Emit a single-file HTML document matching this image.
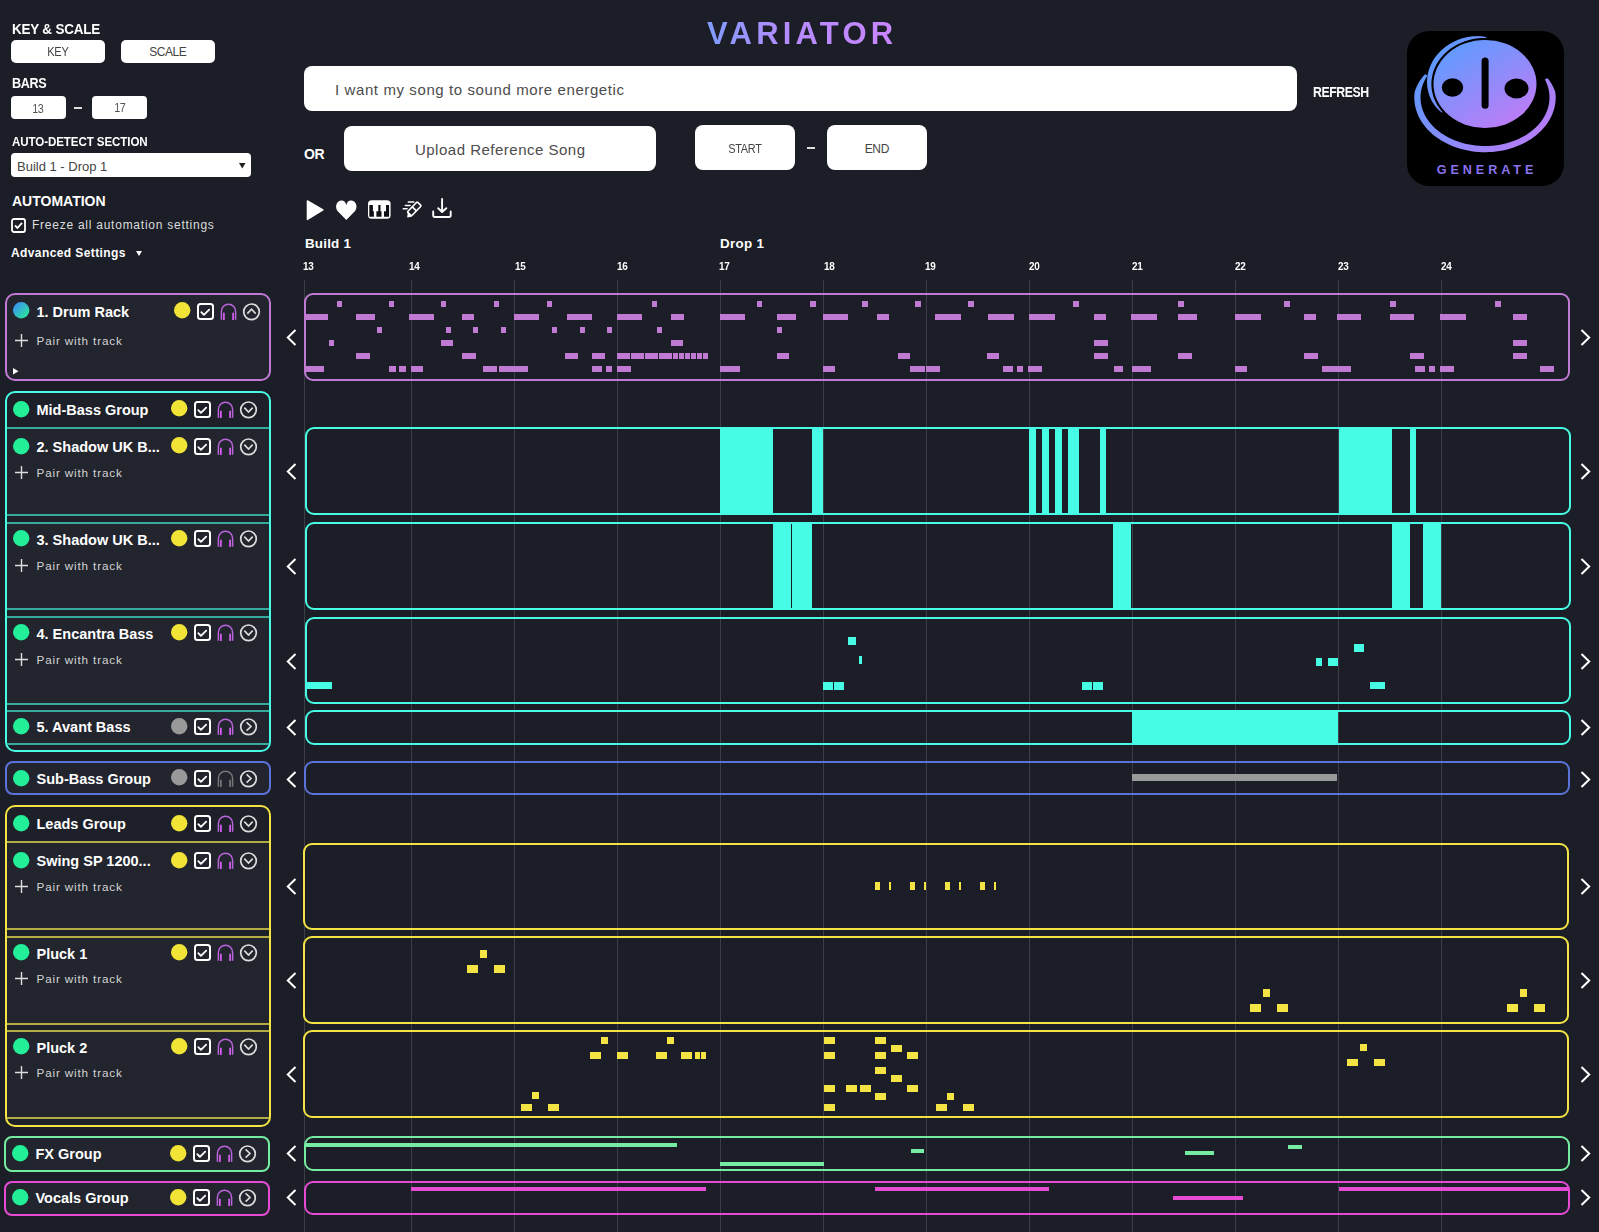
<!DOCTYPE html>
<html><head><meta charset="utf-8"><style>
html,body{margin:0;padding:0;}
body{width:1599px;height:1232px;background:#1b1e26;position:relative;overflow:hidden;font-family:"Liberation Sans", sans-serif;}
.t{position:absolute;white-space:nowrap;line-height:1;}
svg{position:absolute;overflow:visible;}
</style></head><body>

<div class="t" style="left:12px;top:21.65px;font-size:14px;font-weight:700;color:#fff;letter-spacing:-0.2px;transform:scaleX(0.96);transform-origin:0 0;">KEY &amp; SCALE</div>
<div style="position:absolute;left:11px;top:40px;width:94px;height:23px;background:#fff;border-radius:5px;"></div>
<div style="position:absolute;left:121px;top:40px;width:94px;height:23px;background:#fff;border-radius:5px;"></div>
<div class="t" style="left:-92.0px;width:300px;text-align:center;top:46.14px;font-size:12px;font-weight:400;color:#444;letter-spacing:-0.3px;text-indent:-0.3px;transform:scaleX(0.92);transform-origin:50% 0;">KEY</div>
<div class="t" style="left:18.0px;width:300px;text-align:center;top:46.24px;font-size:12px;font-weight:400;color:#444;letter-spacing:-0.4px;text-indent:-0.4px;">SCALE</div>
<div class="t" style="left:12px;top:76.45px;font-size:14px;font-weight:700;color:#fff;letter-spacing:-0.4px;transform:scaleX(0.9);transform-origin:0 0;">BARS</div>
<div style="position:absolute;left:11px;top:96px;width:55px;height:23px;background:#fff;border-radius:4px;"></div>
<div style="position:absolute;left:92px;top:96px;width:55px;height:23px;background:#fff;border-radius:4px;"></div>
<div class="t" style="left:-112.0px;width:300px;text-align:center;top:102.84px;font-size:12px;font-weight:400;color:#555;letter-spacing:-0.4px;text-indent:-0.4px;transform:scaleX(0.9);transform-origin:50% 0;">13</div>
<div class="t" style="left:-30.0px;width:300px;text-align:center;top:101.84px;font-size:12px;font-weight:400;color:#555;letter-spacing:-0.4px;text-indent:-0.4px;transform:scaleX(0.9);transform-origin:50% 0;">17</div>
<div style="position:absolute;left:74px;top:107px;width:8px;height:1.6px;background:#ddd;"></div>
<div class="t" style="left:12px;top:135.64px;font-size:12px;font-weight:700;color:#fff;letter-spacing:-0.1px;transform:scaleX(0.965);transform-origin:0 0;">AUTO-DETECT SECTION</div>
<div style="position:absolute;left:11px;top:153px;width:240px;height:24px;background:#fff;border-radius:4px;"></div>
<div class="t" style="left:17px;top:159.50px;font-size:13px;font-weight:400;color:#444;letter-spacing:0px;">Build 1 - Drop 1</div>
<svg style="left:239px;top:163px" width="7" height="6"><path d="M0 0 L6.5 0 L3.25 5.5 Z" fill="#222"/></svg>
<div class="t" style="left:12px;top:194.45px;font-size:14px;font-weight:700;color:#fff;letter-spacing:0px;">AUTOMATION</div>
<svg style="left:11px;top:218px" width="15" height="15"><rect x="1" y="1" width="13" height="13" rx="2" fill="none" stroke="#fff" stroke-width="1.8"/><path d="M4 7.5 L6.5 10 L11 4.8" fill="none" stroke="#fff" stroke-width="1.8"/></svg>
<div class="t" style="left:32px;top:219.34px;font-size:12px;font-weight:400;color:#ddd;letter-spacing:0.75px;">Freeze all automation settings</div>
<div class="t" style="left:11px;top:247.34px;font-size:12px;font-weight:700;color:#fff;letter-spacing:0.4px;">Advanced Settings</div>
<svg style="left:136px;top:251px" width="7" height="6"><path d="M0 0 L6 0 L3 5 Z" fill="#fff"/></svg>
<div class="t" style="left:707px;top:17.66px;font-size:31px;font-weight:700;letter-spacing:4.2px;background:linear-gradient(90deg,#7f9cff 0%,#b48cff 40%,#c985ff 100%);-webkit-background-clip:text;background-clip:text;color:transparent;">VARIATOR</div>
<div style="position:absolute;left:304px;top:66px;width:993px;height:45px;background:#fff;border-radius:8px;"></div>
<div class="t" style="left:335px;top:82.30px;font-size:15px;font-weight:400;color:#4c4c4c;letter-spacing:0.6px;">I want my song to sound more energetic</div>
<div class="t" style="left:1312.5px;top:84.95px;font-size:14px;font-weight:700;color:#fff;letter-spacing:-0.5px;transform:scaleX(0.88);transform-origin:0 0;">REFRESH</div>
<div class="t" style="left:304px;top:146.75px;font-size:14px;font-weight:700;color:#fff;letter-spacing:-0.4px;">OR</div>
<div style="position:absolute;left:344px;top:126px;width:312px;height:45px;background:#fff;border-radius:8px;"></div>
<div class="t" style="left:350.0px;width:300px;text-align:center;top:142.10px;font-size:15px;font-weight:400;color:#4c4c4c;letter-spacing:0.5px;text-indent:0.5px;">Upload Reference Song</div>
<div style="position:absolute;left:695px;top:125px;width:100px;height:45px;background:#fff;border-radius:8px;"></div>
<div style="position:absolute;left:827px;top:125px;width:100px;height:45px;background:#fff;border-radius:8px;"></div>
<div class="t" style="left:595.0px;width:300px;text-align:center;top:143.34px;font-size:12px;font-weight:400;color:#444;letter-spacing:-0.3px;text-indent:-0.3px;transform:scaleX(0.91);transform-origin:50% 0;">START</div>
<div class="t" style="left:727.0px;width:300px;text-align:center;top:143.34px;font-size:12px;font-weight:400;color:#444;letter-spacing:-0.3px;text-indent:-0.3px;">END</div>
<div style="position:absolute;left:807px;top:147px;width:8px;height:1.8px;background:#ddd;"></div>
<svg style="left:1407px;top:31px" width="157" height="155" viewBox="0 0 157 155">
<defs>
<linearGradient id="lg" x1="0.15" y1="0" x2="0.85" y2="1">
<stop offset="0" stop-color="#5a9dff"/><stop offset="1" stop-color="#c47af6"/></linearGradient>
<linearGradient id="lg2" gradientUnits="userSpaceOnUse" x1="10" y1="10" x2="150" y2="130">
<stop offset="0" stop-color="#4f9dff"/><stop offset="1" stop-color="#c977f5"/></linearGradient>
</defs>
<rect x="0" y="0" width="157" height="155" rx="22" fill="#000"/>
<ellipse cx="78" cy="53" rx="51.5" ry="44" fill="url(#lg)"/>
<path d="M79.87 6.93 L78.35 6.90 L76.83 6.91 L75.31 6.96 L73.79 7.04 L72.28 7.16 L70.77 7.32 L69.27 7.52 L67.77 7.75 L66.28 8.01 L64.81 8.32 L63.34 8.66 L61.88 9.03 L60.44 9.44 L59.01 9.89 L57.60 10.37 L56.20 10.89 L54.82 11.43 L53.46 12.02 L52.12 12.63 L50.80 13.28 L49.50 13.96 L48.22 14.67 L46.97 15.41 L45.74 16.18 L44.54 16.98 L43.37 17.81 L42.22 18.67 L41.10 19.56 L40.02 20.47 L38.96 21.41 L37.93 22.38 L36.94 23.37 L35.98 24.38 L35.05 25.42 L34.16 26.48 L33.30 27.56 L32.48 28.66 L31.70 29.78 L30.95 30.91 L30.24 32.07 L29.57 33.24 L28.94 34.43 L28.35 35.64 L27.79 36.86 L27.28 38.09 L26.81 39.33 L26.38 40.58 L25.99 41.85 L25.65 43.12 L25.34 44.40 L25.08 45.69 L24.86 46.98 L24.68 48.28 L24.55 49.58 L24.46 50.89 L24.41 52.20 L24.40 53.50 L24.44 54.81 L24.52 56.12 L24.65 57.42 L24.81 58.72 L25.02 60.01 L25.28 61.30 L25.57 62.58 L25.91 63.86 L26.29 65.13 L26.71 66.38 L27.17 67.63 L27.67 68.86 L28.22 70.08 L28.80 71.29 L29.42 72.48 L30.08 73.66 L30.78 74.82 L31.52 75.96 L32.30 77.09 L33.11 78.19 L33.96 79.28 L34.84 80.34 L35.76 81.38 L35.53 81.57 L34.07 80.91 L32.89 80.02 L31.79 79.05 L30.75 78.03 L29.77 76.97 L28.83 75.87 L27.94 74.74 L27.09 73.57 L26.29 72.37 L25.54 71.15 L24.83 69.90 L24.17 68.63 L23.56 67.34 L22.99 66.02 L22.47 64.69 L22.01 63.34 L21.59 61.98 L21.22 60.60 L20.90 59.21 L20.63 57.81 L20.41 56.39 L20.24 54.97 L20.12 53.55 L20.06 52.12 L20.04 50.69 L20.08 49.25 L20.17 47.82 L20.31 46.38 L20.50 44.95 L20.74 43.53 L21.03 42.11 L21.37 40.69 L21.76 39.29 L22.20 37.90 L22.70 36.52 L23.24 35.15 L23.83 33.80 L24.46 32.46 L25.15 31.15 L25.88 29.85 L26.65 28.57 L27.47 27.31 L28.34 26.08 L29.25 24.87 L30.20 23.69 L31.19 22.53 L32.22 21.40 L33.29 20.31 L34.40 19.24 L35.55 18.20 L36.73 17.20 L37.94 16.23 L39.19 15.29 L40.47 14.40 L41.78 13.53 L43.12 12.71 L44.49 11.92 L45.89 11.17 L47.31 10.47 L48.75 9.80 L50.21 9.18 L51.69 8.59 L53.20 8.05 L54.72 7.56 L56.25 7.10 L57.80 6.70 L59.36 6.33 L60.93 6.02 L62.51 5.75 L64.10 5.52 L65.69 5.35 L67.28 5.22 L68.88 5.14 L70.47 5.12 L72.06 5.15 L73.65 5.24 L75.23 5.39 L76.80 5.61 L78.36 5.94 L79.88 6.63 Z" fill="url(#lg2)"/>
<path d="M20.53 44.48 L19.14 46.67 L17.90 48.90 L16.80 51.18 L15.86 53.50 L15.07 55.85 L14.45 58.22 L13.98 60.62 L13.67 63.03 L13.52 65.45 L13.53 67.88 L13.70 70.29 L14.03 72.70 L14.52 75.10 L15.17 77.47 L15.98 79.82 L16.94 82.13 L18.06 84.40 L19.32 86.63 L20.73 88.81 L22.28 90.93 L23.97 92.99 L25.80 94.99 L27.76 96.92 L29.84 98.76 L32.04 100.53 L34.36 102.22 L36.79 103.81 L39.32 105.31 L41.94 106.71 L44.66 108.02 L47.46 109.22 L50.33 110.31 L53.28 111.30 L56.28 112.17 L59.34 112.93 L62.45 113.57 L65.60 114.09 L68.77 114.50 L71.97 114.79 L75.19 114.95 L78.41 115.00 L81.63 114.92 L84.84 114.73 L88.03 114.41 L91.20 113.97 L94.34 113.42 L97.44 112.75 L100.48 111.96 L103.47 111.06 L106.40 110.05 L109.26 108.92 L112.04 107.70 L114.73 106.37 L117.33 104.94 L119.84 103.41 L122.24 101.80 L124.52 100.09 L126.70 98.30 L128.75 96.43 L130.67 94.49 L132.47 92.48 L134.12 90.40 L135.64 88.26 L137.01 86.07 L138.24 83.83 L139.32 81.55 L140.24 79.23 L141.01 76.87 L141.62 74.49 L142.07 72.10 L142.36 69.68 L142.49 67.26 L142.46 64.84 L142.27 62.42 L141.92 60.01 L141.41 57.62 L140.74 55.25 L139.92 52.91 L138.94 50.60 L137.80 48.33 L140.68 47.17 L142.38 49.41 L143.93 51.74 L145.34 54.15 L146.59 56.66 L147.68 59.23 L148.45 61.90 L148.66 64.63 L148.69 67.36 L148.55 70.09 L148.23 72.81 L147.73 75.52 L147.06 78.20 L146.22 80.85 L145.21 83.47 L144.03 86.05 L142.69 88.57 L141.18 91.05 L139.52 93.46 L137.70 95.80 L135.74 98.07 L133.63 100.26 L131.38 102.37 L129.00 104.39 L126.49 106.31 L123.86 108.13 L121.11 109.85 L118.26 111.46 L115.31 112.96 L112.26 114.35 L109.13 115.61 L105.92 116.75 L102.64 117.77 L99.30 118.66 L95.91 119.42 L92.47 120.04 L89.00 120.53 L85.50 120.89 L81.98 121.11 L78.45 121.20 L74.92 121.15 L71.39 120.96 L67.89 120.64 L64.40 120.18 L60.96 119.59 L57.55 118.86 L54.20 118.01 L50.90 117.02 L47.67 115.91 L44.52 114.68 L41.45 113.33 L38.48 111.86 L35.60 110.27 L32.83 108.58 L30.17 106.78 L27.63 104.88 L25.21 102.89 L22.93 100.80 L20.78 98.63 L18.78 96.38 L16.93 94.06 L15.22 91.66 L13.68 89.21 L12.29 86.69 L11.07 84.13 L10.02 81.52 L9.13 78.87 L8.42 76.20 L7.88 73.50 L7.52 70.78 L7.33 68.05 L7.32 65.32 L7.48 62.59 L7.98 59.89 L8.95 57.27 L10.08 54.72 L11.38 52.25 L12.83 49.86 L14.43 47.55 L16.17 45.34 L18.04 43.21 Z" fill="url(#lg2)"/>
<ellipse cx="45.5" cy="56.5" rx="10.7" ry="9.2" fill="#000"/>
<ellipse cx="109.5" cy="57.5" rx="12" ry="10" fill="#000"/>
<rect x="74.6" y="26.6" width="7" height="51.2" rx="3.5" fill="#000"/>
</svg>
<div class="t" style="left:1405.0px;width:160px;text-align:center;top:163.93px;font-size:12.6px;font-weight:700;color:#8a73ee;letter-spacing:3.95px;text-indent:3.95px;">GENERATE</div>
<svg style="left:305px;top:199px" width="20" height="22" viewBox="0 0 20 22"><path d="M2.4 1.9 L17.9 10.9 L2.4 20.4 Z" fill="#fff" stroke="#fff" stroke-width="1.4" stroke-linejoin="round"/></svg>
<svg style="left:335px;top:200px" width="23" height="21" viewBox="0 0 23 21"><path d="M11.3 19.9 L3 11.6 C-0.2 8.4 0.6 1.3 6.1 0.6 C8.6 0.3 10.4 1.8 11.3 4.9 C12.2 1.8 14 0.3 16.5 0.6 C22 1.3 22.8 8.4 19.6 11.6 Z" fill="#fff"/></svg>
<svg style="left:367px;top:199px" width="25" height="21" viewBox="0 0 25 21"><rect x="1" y="1.2" width="22.6" height="18.6" rx="3.6" fill="#fff"/><path d="M2.3 6 H5.9 V12.2 H6.9 V17.7 H2.3 Z M11.3 6 H13.5 V12.2 H14.5 V17.7 H9.4 V12.2 H11.3 Z M19 6 H22.1 V17.7 H17 V12.2 H19 Z" fill="#0e1015"/></svg>
<svg style="left:400px;top:199px" width="23" height="21" viewBox="0 0 23 21"><g transform="translate(13.6 10.6) rotate(-46)"><rect x="-6" y="-2.9" width="14" height="5.8" rx="0.9" fill="none" stroke="#fff" stroke-width="1.7"/><path d="M1 -2.9 L1 2.9" stroke="#fff" stroke-width="1.6"/><path d="M-6 -1.6 L-9.3 0.9 L-6 2.9 Z" fill="#fff" stroke="#fff" stroke-width="1" stroke-linejoin="round"/></g><path d="M8.3 3.1 L13.8 3.1 M5.4 6.5 L10 6.5 M3.2 9.8 L7.1 9.8" stroke="#fff" stroke-width="1.5" stroke-linecap="round"/></svg>
<svg style="left:430px;top:196px" width="24" height="24" viewBox="0 0 24 24"><path d="M12.1 3 L12.1 15.6 M8.2 12.2 L12.1 16 L16.3 12.2" fill="none" stroke="#fff" stroke-width="1.9" stroke-linecap="round" stroke-linejoin="round"/><path d="M3.2 15.4 L3.2 19.2 Q3.2 21 5 21 L19 21 Q20.7 21 20.7 19.2 L20.7 15.4" fill="none" stroke="#fff" stroke-width="1.9" stroke-linecap="round" stroke-linejoin="round"/></svg>
<div class="t" style="left:305px;top:237.46px;font-size:13.4px;font-weight:700;color:#fff;letter-spacing:0.2px;">Build 1</div>
<div class="t" style="left:720px;top:237.06px;font-size:13.4px;font-weight:700;color:#fff;letter-spacing:0.3px;">Drop 1</div>
<div class="t" style="left:303px;top:260.10px;font-size:11.7px;font-weight:700;color:#fff;letter-spacing:-0.3px;transform:scaleX(0.85);transform-origin:0 0;">13</div>
<div style="position:absolute;left:304px;top:280px;width:1px;height:952px;background:#3b3e46;"></div>
<div class="t" style="left:409px;top:260.10px;font-size:11.7px;font-weight:700;color:#fff;letter-spacing:-0.3px;transform:scaleX(0.85);transform-origin:0 0;">14</div>
<div style="position:absolute;left:411px;top:280px;width:1px;height:952px;background:#3b3e46;"></div>
<div class="t" style="left:515px;top:260.10px;font-size:11.7px;font-weight:700;color:#fff;letter-spacing:-0.3px;transform:scaleX(0.85);transform-origin:0 0;">15</div>
<div style="position:absolute;left:514px;top:280px;width:1px;height:952px;background:#3b3e46;"></div>
<div class="t" style="left:617px;top:260.10px;font-size:11.7px;font-weight:700;color:#fff;letter-spacing:-0.3px;transform:scaleX(0.85);transform-origin:0 0;">16</div>
<div style="position:absolute;left:617px;top:280px;width:1px;height:952px;background:#3b3e46;"></div>
<div class="t" style="left:719px;top:260.10px;font-size:11.7px;font-weight:700;color:#fff;letter-spacing:-0.3px;transform:scaleX(0.85);transform-origin:0 0;">17</div>
<div style="position:absolute;left:720px;top:280px;width:1px;height:952px;background:#3b3e46;"></div>
<div class="t" style="left:824px;top:260.10px;font-size:11.7px;font-weight:700;color:#fff;letter-spacing:-0.3px;transform:scaleX(0.85);transform-origin:0 0;">18</div>
<div style="position:absolute;left:823px;top:280px;width:1px;height:952px;background:#3b3e46;"></div>
<div class="t" style="left:925px;top:260.10px;font-size:11.7px;font-weight:700;color:#fff;letter-spacing:-0.3px;transform:scaleX(0.85);transform-origin:0 0;">19</div>
<div style="position:absolute;left:926px;top:280px;width:1px;height:952px;background:#3b3e46;"></div>
<div class="t" style="left:1029px;top:260.10px;font-size:11.7px;font-weight:700;color:#fff;letter-spacing:-0.3px;transform:scaleX(0.85);transform-origin:0 0;">20</div>
<div style="position:absolute;left:1029px;top:280px;width:1px;height:952px;background:#3b3e46;"></div>
<div class="t" style="left:1132px;top:260.10px;font-size:11.7px;font-weight:700;color:#fff;letter-spacing:-0.3px;transform:scaleX(0.85);transform-origin:0 0;">21</div>
<div style="position:absolute;left:1132px;top:280px;width:1px;height:952px;background:#3b3e46;"></div>
<div class="t" style="left:1235px;top:260.10px;font-size:11.7px;font-weight:700;color:#fff;letter-spacing:-0.3px;transform:scaleX(0.85);transform-origin:0 0;">22</div>
<div style="position:absolute;left:1235px;top:280px;width:1px;height:952px;background:#3b3e46;"></div>
<div class="t" style="left:1338px;top:260.10px;font-size:11.7px;font-weight:700;color:#fff;letter-spacing:-0.3px;transform:scaleX(0.85);transform-origin:0 0;">23</div>
<div style="position:absolute;left:1338px;top:280px;width:1px;height:952px;background:#3b3e46;"></div>
<div class="t" style="left:1441px;top:260.10px;font-size:11.7px;font-weight:700;color:#fff;letter-spacing:-0.3px;transform:scaleX(0.85);transform-origin:0 0;">24</div>
<div style="position:absolute;left:1441px;top:280px;width:1px;height:952px;background:#3b3e46;"></div>
<div style="position:absolute;left:304px;top:293px;width:1266px;height:88px;box-sizing:border-box;border:2px solid #c07ad4;border-radius:9px;"></div>
<div style="position:absolute;left:337px;top:301px;width:5px;height:6px;background:#c07ad4;"></div>
<div style="position:absolute;left:389px;top:301px;width:5px;height:6px;background:#c07ad4;"></div>
<div style="position:absolute;left:441px;top:301px;width:5px;height:6px;background:#c07ad4;"></div>
<div style="position:absolute;left:494px;top:301px;width:5px;height:6px;background:#c07ad4;"></div>
<div style="position:absolute;left:547px;top:301px;width:5px;height:6px;background:#c07ad4;"></div>
<div style="position:absolute;left:652px;top:301px;width:5px;height:6px;background:#c07ad4;"></div>
<div style="position:absolute;left:757px;top:301px;width:5px;height:6px;background:#c07ad4;"></div>
<div style="position:absolute;left:810px;top:301px;width:6px;height:6px;background:#c07ad4;"></div>
<div style="position:absolute;left:862px;top:301px;width:6px;height:6px;background:#c07ad4;"></div>
<div style="position:absolute;left:915px;top:301px;width:6px;height:6px;background:#c07ad4;"></div>
<div style="position:absolute;left:968px;top:301px;width:6px;height:6px;background:#c07ad4;"></div>
<div style="position:absolute;left:1073px;top:301px;width:6px;height:6px;background:#c07ad4;"></div>
<div style="position:absolute;left:1178px;top:301px;width:6px;height:6px;background:#c07ad4;"></div>
<div style="position:absolute;left:1284px;top:301px;width:6px;height:6px;background:#c07ad4;"></div>
<div style="position:absolute;left:1390px;top:301px;width:6px;height:6px;background:#c07ad4;"></div>
<div style="position:absolute;left:1495px;top:301px;width:6px;height:6px;background:#c07ad4;"></div>
<div style="position:absolute;left:305px;top:314px;width:23px;height:6px;background:#c07ad4;"></div>
<div style="position:absolute;left:356px;top:314px;width:19px;height:6px;background:#c07ad4;"></div>
<div style="position:absolute;left:409px;top:314px;width:25px;height:6px;background:#c07ad4;"></div>
<div style="position:absolute;left:462px;top:314px;width:12px;height:6px;background:#c07ad4;"></div>
<div style="position:absolute;left:514px;top:314px;width:25px;height:6px;background:#c07ad4;"></div>
<div style="position:absolute;left:567px;top:314px;width:25px;height:6px;background:#c07ad4;"></div>
<div style="position:absolute;left:617px;top:314px;width:25px;height:6px;background:#c07ad4;"></div>
<div style="position:absolute;left:671px;top:314px;width:13px;height:6px;background:#c07ad4;"></div>
<div style="position:absolute;left:720px;top:314px;width:25px;height:6px;background:#c07ad4;"></div>
<div style="position:absolute;left:777px;top:314px;width:19px;height:6px;background:#c07ad4;"></div>
<div style="position:absolute;left:823px;top:314px;width:25px;height:6px;background:#c07ad4;"></div>
<div style="position:absolute;left:877px;top:314px;width:12px;height:6px;background:#c07ad4;"></div>
<div style="position:absolute;left:935px;top:314px;width:26px;height:6px;background:#c07ad4;"></div>
<div style="position:absolute;left:988px;top:314px;width:26px;height:6px;background:#c07ad4;"></div>
<div style="position:absolute;left:1029px;top:314px;width:26px;height:6px;background:#c07ad4;"></div>
<div style="position:absolute;left:1094px;top:314px;width:12px;height:6px;background:#c07ad4;"></div>
<div style="position:absolute;left:1131px;top:314px;width:26px;height:6px;background:#c07ad4;"></div>
<div style="position:absolute;left:1178px;top:314px;width:19px;height:6px;background:#c07ad4;"></div>
<div style="position:absolute;left:1235px;top:314px;width:26px;height:6px;background:#c07ad4;"></div>
<div style="position:absolute;left:1304px;top:314px;width:12px;height:6px;background:#c07ad4;"></div>
<div style="position:absolute;left:1337px;top:314px;width:24px;height:6px;background:#c07ad4;"></div>
<div style="position:absolute;left:1390px;top:314px;width:24px;height:6px;background:#c07ad4;"></div>
<div style="position:absolute;left:1440px;top:314px;width:26px;height:6px;background:#c07ad4;"></div>
<div style="position:absolute;left:1513px;top:314px;width:14px;height:6px;background:#c07ad4;"></div>
<div style="position:absolute;left:377px;top:327px;width:5px;height:6px;background:#c07ad4;"></div>
<div style="position:absolute;left:446px;top:327px;width:5px;height:6px;background:#c07ad4;"></div>
<div style="position:absolute;left:473px;top:327px;width:5px;height:6px;background:#c07ad4;"></div>
<div style="position:absolute;left:501px;top:327px;width:5px;height:6px;background:#c07ad4;"></div>
<div style="position:absolute;left:552px;top:327px;width:5px;height:6px;background:#c07ad4;"></div>
<div style="position:absolute;left:580px;top:327px;width:5px;height:6px;background:#c07ad4;"></div>
<div style="position:absolute;left:607px;top:327px;width:5px;height:6px;background:#c07ad4;"></div>
<div style="position:absolute;left:657px;top:327px;width:5px;height:6px;background:#c07ad4;"></div>
<div style="position:absolute;left:777px;top:327px;width:5px;height:6px;background:#c07ad4;"></div>
<div style="position:absolute;left:329px;top:340px;width:5px;height:6px;background:#c07ad4;"></div>
<div style="position:absolute;left:441px;top:340px;width:12px;height:6px;background:#c07ad4;"></div>
<div style="position:absolute;left:671px;top:340px;width:12px;height:6px;background:#c07ad4;"></div>
<div style="position:absolute;left:1094px;top:340px;width:14px;height:6px;background:#c07ad4;"></div>
<div style="position:absolute;left:1513px;top:340px;width:14px;height:6px;background:#c07ad4;"></div>
<div style="position:absolute;left:356px;top:353px;width:14px;height:6px;background:#c07ad4;"></div>
<div style="position:absolute;left:462px;top:353px;width:14px;height:6px;background:#c07ad4;"></div>
<div style="position:absolute;left:565px;top:353px;width:13px;height:6px;background:#c07ad4;"></div>
<div style="position:absolute;left:592px;top:353px;width:13px;height:6px;background:#c07ad4;"></div>
<div style="position:absolute;left:617px;top:353px;width:13px;height:6px;background:#c07ad4;"></div>
<div style="position:absolute;left:631px;top:353px;width:13px;height:6px;background:#c07ad4;"></div>
<div style="position:absolute;left:645px;top:353px;width:13px;height:6px;background:#c07ad4;"></div>
<div style="position:absolute;left:659px;top:353px;width:13px;height:6px;background:#c07ad4;"></div>
<div style="position:absolute;left:673px;top:353px;width:5px;height:6px;background:#c07ad4;"></div>
<div style="position:absolute;left:679px;top:353px;width:5px;height:6px;background:#c07ad4;"></div>
<div style="position:absolute;left:685px;top:353px;width:5px;height:6px;background:#c07ad4;"></div>
<div style="position:absolute;left:691px;top:353px;width:5px;height:6px;background:#c07ad4;"></div>
<div style="position:absolute;left:697px;top:353px;width:5px;height:6px;background:#c07ad4;"></div>
<div style="position:absolute;left:703px;top:353px;width:5px;height:6px;background:#c07ad4;"></div>
<div style="position:absolute;left:777px;top:353px;width:12px;height:6px;background:#c07ad4;"></div>
<div style="position:absolute;left:898px;top:353px;width:12px;height:6px;background:#c07ad4;"></div>
<div style="position:absolute;left:987px;top:353px;width:12px;height:6px;background:#c07ad4;"></div>
<div style="position:absolute;left:1094px;top:353px;width:14px;height:6px;background:#c07ad4;"></div>
<div style="position:absolute;left:1178px;top:353px;width:14px;height:6px;background:#c07ad4;"></div>
<div style="position:absolute;left:1304px;top:353px;width:14px;height:6px;background:#c07ad4;"></div>
<div style="position:absolute;left:1410px;top:353px;width:14px;height:6px;background:#c07ad4;"></div>
<div style="position:absolute;left:1513px;top:353px;width:14px;height:6px;background:#c07ad4;"></div>
<div style="position:absolute;left:305px;top:366px;width:19px;height:6px;background:#c07ad4;"></div>
<div style="position:absolute;left:389px;top:366px;width:7px;height:6px;background:#c07ad4;"></div>
<div style="position:absolute;left:399px;top:366px;width:7px;height:6px;background:#c07ad4;"></div>
<div style="position:absolute;left:411px;top:366px;width:12px;height:6px;background:#c07ad4;"></div>
<div style="position:absolute;left:483px;top:366px;width:14px;height:6px;background:#c07ad4;"></div>
<div style="position:absolute;left:499px;top:366px;width:29px;height:6px;background:#c07ad4;"></div>
<div style="position:absolute;left:592px;top:366px;width:10px;height:6px;background:#c07ad4;"></div>
<div style="position:absolute;left:606px;top:366px;width:6px;height:6px;background:#c07ad4;"></div>
<div style="position:absolute;left:617px;top:366px;width:14px;height:6px;background:#c07ad4;"></div>
<div style="position:absolute;left:720px;top:366px;width:20px;height:6px;background:#c07ad4;"></div>
<div style="position:absolute;left:823px;top:366px;width:12px;height:6px;background:#c07ad4;"></div>
<div style="position:absolute;left:910px;top:366px;width:15px;height:6px;background:#c07ad4;"></div>
<div style="position:absolute;left:926px;top:366px;width:14px;height:6px;background:#c07ad4;"></div>
<div style="position:absolute;left:1003px;top:366px;width:10px;height:6px;background:#c07ad4;"></div>
<div style="position:absolute;left:1017px;top:366px;width:6px;height:6px;background:#c07ad4;"></div>
<div style="position:absolute;left:1028px;top:366px;width:14px;height:6px;background:#c07ad4;"></div>
<div style="position:absolute;left:1114px;top:366px;width:9px;height:6px;background:#c07ad4;"></div>
<div style="position:absolute;left:1132px;top:366px;width:19px;height:6px;background:#c07ad4;"></div>
<div style="position:absolute;left:1235px;top:366px;width:12px;height:6px;background:#c07ad4;"></div>
<div style="position:absolute;left:1322px;top:366px;width:29px;height:6px;background:#c07ad4;"></div>
<div style="position:absolute;left:1415px;top:366px;width:10px;height:6px;background:#c07ad4;"></div>
<div style="position:absolute;left:1429px;top:366px;width:6px;height:6px;background:#c07ad4;"></div>
<div style="position:absolute;left:1440px;top:366px;width:14px;height:6px;background:#c07ad4;"></div>
<div style="position:absolute;left:1540px;top:366px;width:14px;height:6px;background:#c07ad4;"></div>
<svg style="left:286px;top:328.5px" width="11" height="17" viewBox="0 0 11 17"><path d="M9.5 1 L1.8 8.5 L9.5 16" fill="none" stroke="#fff" stroke-width="2"/></svg>
<svg style="left:1580px;top:328.5px" width="11" height="17" viewBox="0 0 11 17"><path d="M1.5 1 L9.2 8.5 L1.5 16" fill="none" stroke="#fff" stroke-width="2"/></svg>
<div style="position:absolute;left:305px;top:427px;width:1266px;height:88px;box-sizing:border-box;border:2px solid #47fce4;border-radius:9px;"></div>
<div style="position:absolute;left:720px;top:428px;width:53px;height:86px;background:#47fce4;"></div>
<div style="position:absolute;left:812px;top:428px;width:11px;height:86px;background:#47fce4;"></div>
<div style="position:absolute;left:1029px;top:428px;width:7px;height:86px;background:#47fce4;"></div>
<div style="position:absolute;left:1042px;top:428px;width:7px;height:86px;background:#47fce4;"></div>
<div style="position:absolute;left:1055px;top:428px;width:7px;height:86px;background:#47fce4;"></div>
<div style="position:absolute;left:1068px;top:428px;width:11px;height:86px;background:#47fce4;"></div>
<div style="position:absolute;left:1100px;top:428px;width:6px;height:86px;background:#47fce4;"></div>
<div style="position:absolute;left:1339px;top:428px;width:53px;height:86px;background:#47fce4;"></div>
<div style="position:absolute;left:1410px;top:428px;width:6px;height:86px;background:#47fce4;"></div>
<svg style="left:286px;top:462.5px" width="11" height="17" viewBox="0 0 11 17"><path d="M9.5 1 L1.8 8.5 L9.5 16" fill="none" stroke="#fff" stroke-width="2"/></svg>
<svg style="left:1580px;top:462.5px" width="11" height="17" viewBox="0 0 11 17"><path d="M1.5 1 L9.2 8.5 L1.5 16" fill="none" stroke="#fff" stroke-width="2"/></svg>
<div style="position:absolute;left:305px;top:522px;width:1266px;height:88px;box-sizing:border-box;border:2px solid #47fce4;border-radius:9px;"></div>
<div style="position:absolute;left:773px;top:523px;width:18px;height:86px;background:#47fce4;"></div>
<div style="position:absolute;left:792px;top:523px;width:20px;height:86px;background:#47fce4;"></div>
<div style="position:absolute;left:1113px;top:523px;width:18px;height:86px;background:#47fce4;"></div>
<div style="position:absolute;left:1392px;top:523px;width:18px;height:86px;background:#47fce4;"></div>
<div style="position:absolute;left:1423px;top:523px;width:18px;height:86px;background:#47fce4;"></div>
<svg style="left:286px;top:557.5px" width="11" height="17" viewBox="0 0 11 17"><path d="M9.5 1 L1.8 8.5 L9.5 16" fill="none" stroke="#fff" stroke-width="2"/></svg>
<svg style="left:1580px;top:557.5px" width="11" height="17" viewBox="0 0 11 17"><path d="M1.5 1 L9.2 8.5 L1.5 16" fill="none" stroke="#fff" stroke-width="2"/></svg>
<div style="position:absolute;left:305px;top:617px;width:1266px;height:87px;box-sizing:border-box;border:2px solid #47fce4;border-radius:9px;"></div>
<div style="position:absolute;left:305px;top:682px;width:27px;height:7px;background:#47fce4;"></div>
<div style="position:absolute;left:848px;top:637px;width:8px;height:8px;background:#47fce4;"></div>
<div style="position:absolute;left:859px;top:656px;width:3px;height:8px;background:#47fce4;"></div>
<div style="position:absolute;left:823px;top:682px;width:10px;height:8px;background:#47fce4;"></div>
<div style="position:absolute;left:834px;top:682px;width:10px;height:8px;background:#47fce4;"></div>
<div style="position:absolute;left:1082px;top:682px;width:10px;height:8px;background:#47fce4;"></div>
<div style="position:absolute;left:1093px;top:682px;width:10px;height:8px;background:#47fce4;"></div>
<div style="position:absolute;left:1316px;top:658px;width:6px;height:8px;background:#47fce4;"></div>
<div style="position:absolute;left:1328px;top:658px;width:10px;height:8px;background:#47fce4;"></div>
<div style="position:absolute;left:1354px;top:644px;width:10px;height:8px;background:#47fce4;"></div>
<div style="position:absolute;left:1370px;top:682px;width:15px;height:7px;background:#47fce4;"></div>
<svg style="left:286px;top:652.5px" width="11" height="17" viewBox="0 0 11 17"><path d="M9.5 1 L1.8 8.5 L9.5 16" fill="none" stroke="#fff" stroke-width="2"/></svg>
<svg style="left:1580px;top:652.5px" width="11" height="17" viewBox="0 0 11 17"><path d="M1.5 1 L9.2 8.5 L1.5 16" fill="none" stroke="#fff" stroke-width="2"/></svg>
<div style="position:absolute;left:305px;top:710px;width:1266px;height:35px;box-sizing:border-box;border:2px solid #47fce4;border-radius:9px;"></div>
<div style="position:absolute;left:1132px;top:711px;width:206px;height:33px;background:#47fce4;"></div>
<svg style="left:286px;top:719.0px" width="11" height="17" viewBox="0 0 11 17"><path d="M9.5 1 L1.8 8.5 L9.5 16" fill="none" stroke="#fff" stroke-width="2"/></svg>
<svg style="left:1580px;top:719.0px" width="11" height="17" viewBox="0 0 11 17"><path d="M1.5 1 L9.2 8.5 L1.5 16" fill="none" stroke="#fff" stroke-width="2"/></svg>
<div style="position:absolute;left:304px;top:761px;width:1266px;height:34px;box-sizing:border-box;border:2px solid #5b73d9;border-radius:9px;"></div>
<div style="position:absolute;left:1132px;top:774px;width:205px;height:7px;background:#9a9a9a;"></div>
<svg style="left:286px;top:770.5px" width="11" height="17" viewBox="0 0 11 17"><path d="M9.5 1 L1.8 8.5 L9.5 16" fill="none" stroke="#fff" stroke-width="2"/></svg>
<svg style="left:1580px;top:770.5px" width="11" height="17" viewBox="0 0 11 17"><path d="M1.5 1 L9.2 8.5 L1.5 16" fill="none" stroke="#fff" stroke-width="2"/></svg>
<div style="position:absolute;left:303px;top:843px;width:1266px;height:87px;box-sizing:border-box;border:2px solid #f3e444;border-radius:9px;"></div>
<div style="position:absolute;left:875px;top:882px;width:5px;height:8px;background:#f3e444;"></div>
<div style="position:absolute;left:889px;top:882px;width:2px;height:8px;background:#f3e444;"></div>
<div style="position:absolute;left:910px;top:882px;width:5px;height:8px;background:#f3e444;"></div>
<div style="position:absolute;left:924px;top:882px;width:2px;height:8px;background:#f3e444;"></div>
<div style="position:absolute;left:945px;top:882px;width:5px;height:8px;background:#f3e444;"></div>
<div style="position:absolute;left:959px;top:882px;width:2px;height:8px;background:#f3e444;"></div>
<div style="position:absolute;left:980px;top:882px;width:5px;height:8px;background:#f3e444;"></div>
<div style="position:absolute;left:994px;top:882px;width:2px;height:8px;background:#f3e444;"></div>
<svg style="left:286px;top:877.5px" width="11" height="17" viewBox="0 0 11 17"><path d="M9.5 1 L1.8 8.5 L9.5 16" fill="none" stroke="#fff" stroke-width="2"/></svg>
<svg style="left:1580px;top:877.5px" width="11" height="17" viewBox="0 0 11 17"><path d="M1.5 1 L9.2 8.5 L1.5 16" fill="none" stroke="#fff" stroke-width="2"/></svg>
<div style="position:absolute;left:303px;top:936px;width:1266px;height:88px;box-sizing:border-box;border:2px solid #f3e444;border-radius:9px;"></div>
<div style="position:absolute;left:480px;top:950px;width:7px;height:8px;background:#f3e444;"></div>
<div style="position:absolute;left:467px;top:965px;width:11px;height:8px;background:#f3e444;"></div>
<div style="position:absolute;left:494px;top:965px;width:11px;height:8px;background:#f3e444;"></div>
<div style="position:absolute;left:1263px;top:989px;width:7px;height:8px;background:#f3e444;"></div>
<div style="position:absolute;left:1250px;top:1004px;width:11px;height:8px;background:#f3e444;"></div>
<div style="position:absolute;left:1277px;top:1004px;width:11px;height:8px;background:#f3e444;"></div>
<div style="position:absolute;left:1520px;top:989px;width:7px;height:8px;background:#f3e444;"></div>
<div style="position:absolute;left:1507px;top:1004px;width:11px;height:8px;background:#f3e444;"></div>
<div style="position:absolute;left:1534px;top:1004px;width:11px;height:8px;background:#f3e444;"></div>
<svg style="left:286px;top:971.5px" width="11" height="17" viewBox="0 0 11 17"><path d="M9.5 1 L1.8 8.5 L9.5 16" fill="none" stroke="#fff" stroke-width="2"/></svg>
<svg style="left:1580px;top:971.5px" width="11" height="17" viewBox="0 0 11 17"><path d="M1.5 1 L9.2 8.5 L1.5 16" fill="none" stroke="#fff" stroke-width="2"/></svg>
<div style="position:absolute;left:303px;top:1030px;width:1266px;height:88px;box-sizing:border-box;border:2px solid #f3e444;border-radius:9px;"></div>
<div style="position:absolute;left:601px;top:1037px;width:7px;height:7px;background:#f3e444;"></div>
<div style="position:absolute;left:667px;top:1037px;width:7px;height:7px;background:#f3e444;"></div>
<div style="position:absolute;left:590px;top:1052px;width:11px;height:7px;background:#f3e444;"></div>
<div style="position:absolute;left:617px;top:1052px;width:11px;height:7px;background:#f3e444;"></div>
<div style="position:absolute;left:656px;top:1052px;width:11px;height:7px;background:#f3e444;"></div>
<div style="position:absolute;left:681px;top:1052px;width:11px;height:7px;background:#f3e444;"></div>
<div style="position:absolute;left:695px;top:1052px;width:5px;height:7px;background:#f3e444;"></div>
<div style="position:absolute;left:701px;top:1052px;width:5px;height:7px;background:#f3e444;"></div>
<div style="position:absolute;left:532px;top:1092px;width:7px;height:7px;background:#f3e444;"></div>
<div style="position:absolute;left:521px;top:1104px;width:11px;height:7px;background:#f3e444;"></div>
<div style="position:absolute;left:548px;top:1104px;width:11px;height:7px;background:#f3e444;"></div>
<div style="position:absolute;left:824px;top:1037px;width:11px;height:7px;background:#f3e444;"></div>
<div style="position:absolute;left:824px;top:1052px;width:11px;height:7px;background:#f3e444;"></div>
<div style="position:absolute;left:824px;top:1085px;width:11px;height:7px;background:#f3e444;"></div>
<div style="position:absolute;left:824px;top:1104px;width:11px;height:7px;background:#f3e444;"></div>
<div style="position:absolute;left:846px;top:1085px;width:11px;height:7px;background:#f3e444;"></div>
<div style="position:absolute;left:860px;top:1085px;width:11px;height:7px;background:#f3e444;"></div>
<div style="position:absolute;left:875px;top:1037px;width:11px;height:7px;background:#f3e444;"></div>
<div style="position:absolute;left:875px;top:1052px;width:11px;height:7px;background:#f3e444;"></div>
<div style="position:absolute;left:875px;top:1067px;width:11px;height:7px;background:#f3e444;"></div>
<div style="position:absolute;left:875px;top:1093px;width:11px;height:7px;background:#f3e444;"></div>
<div style="position:absolute;left:891px;top:1045px;width:11px;height:7px;background:#f3e444;"></div>
<div style="position:absolute;left:891px;top:1075px;width:11px;height:7px;background:#f3e444;"></div>
<div style="position:absolute;left:907px;top:1052px;width:11px;height:7px;background:#f3e444;"></div>
<div style="position:absolute;left:907px;top:1085px;width:11px;height:7px;background:#f3e444;"></div>
<div style="position:absolute;left:936px;top:1104px;width:11px;height:7px;background:#f3e444;"></div>
<div style="position:absolute;left:947px;top:1093px;width:7px;height:7px;background:#f3e444;"></div>
<div style="position:absolute;left:963px;top:1104px;width:11px;height:7px;background:#f3e444;"></div>
<div style="position:absolute;left:1360px;top:1044px;width:7px;height:7px;background:#f3e444;"></div>
<div style="position:absolute;left:1347px;top:1059px;width:11px;height:7px;background:#f3e444;"></div>
<div style="position:absolute;left:1374px;top:1059px;width:11px;height:7px;background:#f3e444;"></div>
<svg style="left:286px;top:1065.5px" width="11" height="17" viewBox="0 0 11 17"><path d="M9.5 1 L1.8 8.5 L9.5 16" fill="none" stroke="#fff" stroke-width="2"/></svg>
<svg style="left:1580px;top:1065.5px" width="11" height="17" viewBox="0 0 11 17"><path d="M1.5 1 L9.2 8.5 L1.5 16" fill="none" stroke="#fff" stroke-width="2"/></svg>
<div style="position:absolute;left:304px;top:1136px;width:1266px;height:35px;box-sizing:border-box;border:2px solid #76eca2;border-radius:9px;"></div>
<div style="position:absolute;left:305px;top:1143px;width:372px;height:4px;background:#76eca2;"></div>
<div style="position:absolute;left:720px;top:1162px;width:104px;height:4px;background:#76eca2;"></div>
<div style="position:absolute;left:911px;top:1149px;width:13px;height:4px;background:#76eca2;"></div>
<div style="position:absolute;left:1185px;top:1151px;width:29px;height:4px;background:#76eca2;"></div>
<div style="position:absolute;left:1288px;top:1145px;width:14px;height:4px;background:#76eca2;"></div>
<svg style="left:286px;top:1145.0px" width="11" height="17" viewBox="0 0 11 17"><path d="M9.5 1 L1.8 8.5 L9.5 16" fill="none" stroke="#fff" stroke-width="2"/></svg>
<svg style="left:1580px;top:1145.0px" width="11" height="17" viewBox="0 0 11 17"><path d="M1.5 1 L9.2 8.5 L1.5 16" fill="none" stroke="#fff" stroke-width="2"/></svg>
<div style="position:absolute;left:304px;top:1181px;width:1266px;height:34px;box-sizing:border-box;border:2px solid #e64bd6;border-radius:9px;"></div>
<div style="position:absolute;left:411px;top:1187px;width:295px;height:4px;background:#e64bd6;"></div>
<div style="position:absolute;left:875px;top:1187px;width:174px;height:4px;background:#e64bd6;"></div>
<div style="position:absolute;left:1173px;top:1196px;width:70px;height:4px;background:#e64bd6;"></div>
<div style="position:absolute;left:1339px;top:1187px;width:229px;height:4px;background:#e64bd6;"></div>
<svg style="left:286px;top:1189.0px" width="11" height="17" viewBox="0 0 11 17"><path d="M9.5 1 L1.8 8.5 L9.5 16" fill="none" stroke="#fff" stroke-width="2"/></svg>
<svg style="left:1580px;top:1189.0px" width="11" height="17" viewBox="0 0 11 17"><path d="M1.5 1 L9.2 8.5 L1.5 16" fill="none" stroke="#fff" stroke-width="2"/></svg>
<div style="position:absolute;left:5px;top:293px;width:266px;height:88px;box-sizing:border-box;border:2px solid #c07ad4;border-radius:10px;background:#22252e;"></div>
<svg style="left:12.5px;top:302.3px" width="17" height="17"><defs><linearGradient id="dg" x1="0" y1="0" x2="1" y2="1"><stop offset="0" stop-color="#3b86ff"/><stop offset="1" stop-color="#2af08e"/></linearGradient></defs><circle cx="8.2" cy="8.2" r="8.2" fill="url(#dg)"/></svg>
<div class="t" style="left:36.5px;top:304.53px;font-size:14.5px;font-weight:700;color:#fff;letter-spacing:0px;">1. Drum Rack</div>
<svg style="left:174px;top:302.3px" width="17" height="17"><circle cx="8.2" cy="8.2" r="8.2" fill="#f2e436"/></svg>
<svg style="left:197px;top:302.5px" width="17" height="17" viewBox="0 0 17 17"><rect x="1" y="1" width="15" height="15" rx="2.5" fill="none" stroke="#fff" stroke-width="2"/><path d="M4.3 9.2 L6.9 11.9 L12.2 6.6" fill="none" stroke="#fff" stroke-width="1.8" stroke-linecap="round" stroke-linejoin="round"/></svg>
<svg style="left:219.5px;top:302.5px" width="17" height="18" viewBox="0 0 17 18"><path d="M1.4 16.8 L1.4 8.5 A7.1 7.3 0 0 1 15.6 8.5 L15.6 16.8" fill="none" stroke="#bb64dd" stroke-width="1.5"/><path d="M3.9 9.8 L3.9 16.9 M13.1 9.8 L13.1 16.9" stroke="#d95ff3" stroke-width="1.7"/></svg>
<svg style="left:243px;top:302.5px" width="17" height="17" viewBox="0 0 17 17"><circle cx="8.5" cy="8.8" r="7.8" fill="none" stroke="#ddd" stroke-width="1.7"/><path d="M4.3 10.6 L8.5 6.2 L12.7 10.6" fill="none" stroke="#ddd" stroke-width="1.6"/></svg>
<svg style="left:14.5px;top:334.0px" width="13" height="13"><path d="M6.5 0 L6.5 13 M0 6.5 L13 6.5" stroke="#ddd" stroke-width="1.4"/></svg>
<div class="t" style="left:36.5px;top:335.10px;font-size:11.7px;font-weight:400;color:#d4d4d4;letter-spacing:0.85px;">Pair with track</div>
<svg style="left:13px;top:368px" width="6" height="7"><path d="M0 0 L5.5 3.2 L0 6.4 Z" fill="#fff"/></svg>
<div style="position:absolute;left:5px;top:391px;width:266px;height:361px;box-sizing:border-box;border:2px solid #47fce4;border-radius:10px;background:#1d2028;"></div>
<div style="position:absolute;left:7px;top:427px;width:262px;height:89px;box-sizing:border-box;border-top:2px solid #36ab9c;border-bottom:2px solid #36ab9c;background:#22252e;"></div>
<div style="position:absolute;left:7px;top:522px;width:262px;height:88px;box-sizing:border-box;border-top:2px solid #36ab9c;border-bottom:2px solid #36ab9c;background:#22252e;"></div>
<div style="position:absolute;left:7px;top:616px;width:262px;height:89px;box-sizing:border-box;border-top:2px solid #36ab9c;border-bottom:2px solid #36ab9c;background:#22252e;"></div>
<div style="position:absolute;left:7px;top:710px;width:262px;height:35px;box-sizing:border-box;border-top:2px solid #36ab9c;border-bottom:2px solid #36ab9c;background:#22252e;"></div>
<svg style="left:12.5px;top:401.3px" width="17" height="17"><circle cx="8.2" cy="8.2" r="8.2" fill="#22ef97"/></svg>
<div class="t" style="left:36.5px;top:403.43px;font-size:14.5px;font-weight:700;color:#fff;letter-spacing:0px;">Mid-Bass Group</div>
<svg style="left:171px;top:400.3px" width="17" height="17"><circle cx="8.2" cy="8.2" r="8.2" fill="#f2e436"/></svg>
<svg style="left:194px;top:400.5px" width="17" height="17" viewBox="0 0 17 17"><rect x="1" y="1" width="15" height="15" rx="2.5" fill="none" stroke="#fff" stroke-width="2"/><path d="M4.3 9.2 L6.9 11.9 L12.2 6.6" fill="none" stroke="#fff" stroke-width="1.8" stroke-linecap="round" stroke-linejoin="round"/></svg>
<svg style="left:216.5px;top:400.5px" width="17" height="18" viewBox="0 0 17 18"><path d="M1.4 16.8 L1.4 8.5 A7.1 7.3 0 0 1 15.6 8.5 L15.6 16.8" fill="none" stroke="#bb64dd" stroke-width="1.5"/><path d="M3.9 9.8 L3.9 16.9 M13.1 9.8 L13.1 16.9" stroke="#d95ff3" stroke-width="1.7"/></svg>
<svg style="left:240px;top:400.5px" width="17" height="17" viewBox="0 0 17 17"><circle cx="8.5" cy="8.8" r="7.8" fill="none" stroke="#ddd" stroke-width="1.7"/><path d="M4.3 6.6 L8.5 11 L12.7 6.6" fill="none" stroke="#ddd" stroke-width="1.6"/></svg>
<svg style="left:12.5px;top:437.8px" width="17" height="17"><circle cx="8.2" cy="8.2" r="8.2" fill="#22ef97"/></svg>
<div class="t" style="left:36.5px;top:440.33px;font-size:14.5px;font-weight:700;color:#fff;letter-spacing:0px;">2. Shadow UK B...</div>
<svg style="left:171px;top:437.3px" width="17" height="17"><circle cx="8.2" cy="8.2" r="8.2" fill="#f2e436"/></svg>
<svg style="left:194px;top:437.5px" width="17" height="17" viewBox="0 0 17 17"><rect x="1" y="1" width="15" height="15" rx="2.5" fill="none" stroke="#fff" stroke-width="2"/><path d="M4.3 9.2 L6.9 11.9 L12.2 6.6" fill="none" stroke="#fff" stroke-width="1.8" stroke-linecap="round" stroke-linejoin="round"/></svg>
<svg style="left:216.5px;top:437.5px" width="17" height="18" viewBox="0 0 17 18"><path d="M1.4 16.8 L1.4 8.5 A7.1 7.3 0 0 1 15.6 8.5 L15.6 16.8" fill="none" stroke="#bb64dd" stroke-width="1.5"/><path d="M3.9 9.8 L3.9 16.9 M13.1 9.8 L13.1 16.9" stroke="#d95ff3" stroke-width="1.7"/></svg>
<svg style="left:240px;top:437.5px" width="17" height="17" viewBox="0 0 17 17"><circle cx="8.5" cy="8.8" r="7.8" fill="none" stroke="#ddd" stroke-width="1.7"/><path d="M4.3 6.6 L8.5 11 L12.7 6.6" fill="none" stroke="#ddd" stroke-width="1.6"/></svg>
<svg style="left:14.5px;top:465.5px" width="13" height="13"><path d="M6.5 0 L6.5 13 M0 6.5 L13 6.5" stroke="#ddd" stroke-width="1.4"/></svg>
<div class="t" style="left:36.5px;top:466.60px;font-size:11.7px;font-weight:400;color:#d4d4d4;letter-spacing:0.85px;">Pair with track</div>
<svg style="left:12.5px;top:530.3px" width="17" height="17"><circle cx="8.2" cy="8.2" r="8.2" fill="#22ef97"/></svg>
<div class="t" style="left:36.5px;top:532.53px;font-size:14.5px;font-weight:700;color:#fff;letter-spacing:0px;">3. Shadow UK B...</div>
<svg style="left:171px;top:529.8px" width="17" height="17"><circle cx="8.2" cy="8.2" r="8.2" fill="#f2e436"/></svg>
<svg style="left:194px;top:530.0px" width="17" height="17" viewBox="0 0 17 17"><rect x="1" y="1" width="15" height="15" rx="2.5" fill="none" stroke="#fff" stroke-width="2"/><path d="M4.3 9.2 L6.9 11.9 L12.2 6.6" fill="none" stroke="#fff" stroke-width="1.8" stroke-linecap="round" stroke-linejoin="round"/></svg>
<svg style="left:216.5px;top:530.0px" width="17" height="18" viewBox="0 0 17 18"><path d="M1.4 16.8 L1.4 8.5 A7.1 7.3 0 0 1 15.6 8.5 L15.6 16.8" fill="none" stroke="#bb64dd" stroke-width="1.5"/><path d="M3.9 9.8 L3.9 16.9 M13.1 9.8 L13.1 16.9" stroke="#d95ff3" stroke-width="1.7"/></svg>
<svg style="left:240px;top:530.0px" width="17" height="17" viewBox="0 0 17 17"><circle cx="8.5" cy="8.8" r="7.8" fill="none" stroke="#ddd" stroke-width="1.7"/><path d="M4.3 6.6 L8.5 11 L12.7 6.6" fill="none" stroke="#ddd" stroke-width="1.6"/></svg>
<svg style="left:14.5px;top:558.5px" width="13" height="13"><path d="M6.5 0 L6.5 13 M0 6.5 L13 6.5" stroke="#ddd" stroke-width="1.4"/></svg>
<div class="t" style="left:36.5px;top:559.60px;font-size:11.7px;font-weight:400;color:#d4d4d4;letter-spacing:0.85px;">Pair with track</div>
<svg style="left:12.5px;top:624.3px" width="17" height="17"><circle cx="8.2" cy="8.2" r="8.2" fill="#22ef97"/></svg>
<div class="t" style="left:36.5px;top:626.53px;font-size:14.5px;font-weight:700;color:#fff;letter-spacing:0px;">4. Encantra Bass</div>
<svg style="left:171px;top:623.8px" width="17" height="17"><circle cx="8.2" cy="8.2" r="8.2" fill="#f2e436"/></svg>
<svg style="left:194px;top:624.0px" width="17" height="17" viewBox="0 0 17 17"><rect x="1" y="1" width="15" height="15" rx="2.5" fill="none" stroke="#fff" stroke-width="2"/><path d="M4.3 9.2 L6.9 11.9 L12.2 6.6" fill="none" stroke="#fff" stroke-width="1.8" stroke-linecap="round" stroke-linejoin="round"/></svg>
<svg style="left:216.5px;top:624.0px" width="17" height="18" viewBox="0 0 17 18"><path d="M1.4 16.8 L1.4 8.5 A7.1 7.3 0 0 1 15.6 8.5 L15.6 16.8" fill="none" stroke="#bb64dd" stroke-width="1.5"/><path d="M3.9 9.8 L3.9 16.9 M13.1 9.8 L13.1 16.9" stroke="#d95ff3" stroke-width="1.7"/></svg>
<svg style="left:240px;top:624.0px" width="17" height="17" viewBox="0 0 17 17"><circle cx="8.5" cy="8.8" r="7.8" fill="none" stroke="#ddd" stroke-width="1.7"/><path d="M4.3 6.6 L8.5 11 L12.7 6.6" fill="none" stroke="#ddd" stroke-width="1.6"/></svg>
<svg style="left:14.5px;top:652.5px" width="13" height="13"><path d="M6.5 0 L6.5 13 M0 6.5 L13 6.5" stroke="#ddd" stroke-width="1.4"/></svg>
<div class="t" style="left:36.5px;top:653.60px;font-size:11.7px;font-weight:400;color:#d4d4d4;letter-spacing:0.85px;">Pair with track</div>
<svg style="left:12.5px;top:718.0999999999999px" width="17" height="17"><circle cx="8.2" cy="8.2" r="8.2" fill="#22ef97"/></svg>
<div class="t" style="left:36.5px;top:720.33px;font-size:14.5px;font-weight:700;color:#fff;letter-spacing:0px;">5. Avant Bass</div>
<svg style="left:171px;top:717.5999999999999px" width="17" height="17"><circle cx="8.2" cy="8.2" r="8.2" fill="#999"/></svg>
<svg style="left:194px;top:717.8px" width="17" height="17" viewBox="0 0 17 17"><rect x="1" y="1" width="15" height="15" rx="2.5" fill="none" stroke="#fff" stroke-width="2"/><path d="M4.3 9.2 L6.9 11.9 L12.2 6.6" fill="none" stroke="#fff" stroke-width="1.8" stroke-linecap="round" stroke-linejoin="round"/></svg>
<svg style="left:216.5px;top:717.8px" width="17" height="18" viewBox="0 0 17 18"><path d="M1.4 16.8 L1.4 8.5 A7.1 7.3 0 0 1 15.6 8.5 L15.6 16.8" fill="none" stroke="#bb64dd" stroke-width="1.5"/><path d="M3.9 9.8 L3.9 16.9 M13.1 9.8 L13.1 16.9" stroke="#d95ff3" stroke-width="1.7"/></svg>
<svg style="left:240px;top:717.8px" width="17" height="17" viewBox="0 0 17 17"><circle cx="8.5" cy="8.8" r="7.8" fill="none" stroke="#ddd" stroke-width="1.7"/><path d="M6.6 4.3 L11 8.5 L6.6 12.7" fill="none" stroke="#ddd" stroke-width="1.6"/></svg>
<div style="position:absolute;left:5px;top:761px;width:266px;height:34px;box-sizing:border-box;border:2px solid #5b73d9;border-radius:8px;background:#22252e;"></div>
<svg style="left:12.5px;top:770.3px" width="17" height="17"><circle cx="8.2" cy="8.2" r="8.2" fill="#22ef97"/></svg>
<div class="t" style="left:36.5px;top:771.53px;font-size:14.5px;font-weight:700;color:#fff;letter-spacing:0px;">Sub-Bass Group</div>
<svg style="left:171px;top:769.3px" width="17" height="17"><circle cx="8.2" cy="8.2" r="8.2" fill="#999"/></svg>
<svg style="left:194px;top:769.5px" width="17" height="17" viewBox="0 0 17 17"><rect x="1" y="1" width="15" height="15" rx="2.5" fill="none" stroke="#fff" stroke-width="2"/><path d="M4.3 9.2 L6.9 11.9 L12.2 6.6" fill="none" stroke="#fff" stroke-width="1.8" stroke-linecap="round" stroke-linejoin="round"/></svg>
<svg style="left:216.5px;top:769.5px" width="17" height="18" viewBox="0 0 17 18"><path d="M1.4 16.8 L1.4 8.5 A7.1 7.3 0 0 1 15.6 8.5 L15.6 16.8" fill="none" stroke="#777" stroke-width="1.5"/><path d="M3.9 9.8 L3.9 16.9 M13.1 9.8 L13.1 16.9" stroke="#777" stroke-width="1.7"/></svg>
<svg style="left:240px;top:769.5px" width="17" height="17" viewBox="0 0 17 17"><circle cx="8.5" cy="8.8" r="7.8" fill="none" stroke="#ddd" stroke-width="1.7"/><path d="M6.6 4.3 L11 8.5 L6.6 12.7" fill="none" stroke="#ddd" stroke-width="1.6"/></svg>
<div style="position:absolute;left:5px;top:805px;width:266px;height:322px;box-sizing:border-box;border:2px solid #f3e444;border-radius:10px;background:#1d2028;"></div>
<div style="position:absolute;left:7px;top:841px;width:262px;height:89px;box-sizing:border-box;border-top:2px solid #b3ab45;border-bottom:2px solid #b3ab45;background:#22252e;"></div>
<div style="position:absolute;left:7px;top:936px;width:262px;height:89px;box-sizing:border-box;border-top:2px solid #b3ab45;border-bottom:2px solid #b3ab45;background:#22252e;"></div>
<div style="position:absolute;left:7px;top:1030px;width:262px;height:89px;box-sizing:border-box;border-top:2px solid #b3ab45;border-bottom:2px solid #b3ab45;background:#22252e;"></div>
<svg style="left:12.5px;top:815.0999999999999px" width="17" height="17"><circle cx="8.2" cy="8.2" r="8.2" fill="#22ef97"/></svg>
<div class="t" style="left:36.5px;top:817.33px;font-size:14.5px;font-weight:700;color:#fff;letter-spacing:0px;">Leads Group</div>
<svg style="left:171px;top:814.5999999999999px" width="17" height="17"><circle cx="8.2" cy="8.2" r="8.2" fill="#f2e436"/></svg>
<svg style="left:194px;top:814.8px" width="17" height="17" viewBox="0 0 17 17"><rect x="1" y="1" width="15" height="15" rx="2.5" fill="none" stroke="#fff" stroke-width="2"/><path d="M4.3 9.2 L6.9 11.9 L12.2 6.6" fill="none" stroke="#fff" stroke-width="1.8" stroke-linecap="round" stroke-linejoin="round"/></svg>
<svg style="left:216.5px;top:814.8px" width="17" height="18" viewBox="0 0 17 18"><path d="M1.4 16.8 L1.4 8.5 A7.1 7.3 0 0 1 15.6 8.5 L15.6 16.8" fill="none" stroke="#bb64dd" stroke-width="1.5"/><path d="M3.9 9.8 L3.9 16.9 M13.1 9.8 L13.1 16.9" stroke="#d95ff3" stroke-width="1.7"/></svg>
<svg style="left:240px;top:814.8px" width="17" height="17" viewBox="0 0 17 17"><circle cx="8.5" cy="8.8" r="7.8" fill="none" stroke="#ddd" stroke-width="1.7"/><path d="M4.3 6.6 L8.5 11 L12.7 6.6" fill="none" stroke="#ddd" stroke-width="1.6"/></svg>
<svg style="left:12.5px;top:852.1999999999999px" width="17" height="17"><circle cx="8.2" cy="8.2" r="8.2" fill="#22ef97"/></svg>
<div class="t" style="left:36.5px;top:854.43px;font-size:14.5px;font-weight:700;color:#fff;letter-spacing:0px;">Swing SP 1200...</div>
<svg style="left:171px;top:851.6999999999999px" width="17" height="17"><circle cx="8.2" cy="8.2" r="8.2" fill="#f2e436"/></svg>
<svg style="left:194px;top:851.9px" width="17" height="17" viewBox="0 0 17 17"><rect x="1" y="1" width="15" height="15" rx="2.5" fill="none" stroke="#fff" stroke-width="2"/><path d="M4.3 9.2 L6.9 11.9 L12.2 6.6" fill="none" stroke="#fff" stroke-width="1.8" stroke-linecap="round" stroke-linejoin="round"/></svg>
<svg style="left:216.5px;top:851.9px" width="17" height="18" viewBox="0 0 17 18"><path d="M1.4 16.8 L1.4 8.5 A7.1 7.3 0 0 1 15.6 8.5 L15.6 16.8" fill="none" stroke="#bb64dd" stroke-width="1.5"/><path d="M3.9 9.8 L3.9 16.9 M13.1 9.8 L13.1 16.9" stroke="#d95ff3" stroke-width="1.7"/></svg>
<svg style="left:240px;top:851.9px" width="17" height="17" viewBox="0 0 17 17"><circle cx="8.5" cy="8.8" r="7.8" fill="none" stroke="#ddd" stroke-width="1.7"/><path d="M4.3 6.6 L8.5 11 L12.7 6.6" fill="none" stroke="#ddd" stroke-width="1.6"/></svg>
<svg style="left:14.5px;top:880.0px" width="13" height="13"><path d="M6.5 0 L6.5 13 M0 6.5 L13 6.5" stroke="#ddd" stroke-width="1.4"/></svg>
<div class="t" style="left:36.5px;top:881.10px;font-size:11.7px;font-weight:400;color:#d4d4d4;letter-spacing:0.85px;">Pair with track</div>
<svg style="left:12.5px;top:944.3px" width="17" height="17"><circle cx="8.2" cy="8.2" r="8.2" fill="#22ef97"/></svg>
<div class="t" style="left:36.5px;top:946.53px;font-size:14.5px;font-weight:700;color:#fff;letter-spacing:0px;">Pluck 1</div>
<svg style="left:171px;top:943.8px" width="17" height="17"><circle cx="8.2" cy="8.2" r="8.2" fill="#f2e436"/></svg>
<svg style="left:194px;top:944.0px" width="17" height="17" viewBox="0 0 17 17"><rect x="1" y="1" width="15" height="15" rx="2.5" fill="none" stroke="#fff" stroke-width="2"/><path d="M4.3 9.2 L6.9 11.9 L12.2 6.6" fill="none" stroke="#fff" stroke-width="1.8" stroke-linecap="round" stroke-linejoin="round"/></svg>
<svg style="left:216.5px;top:944.0px" width="17" height="18" viewBox="0 0 17 18"><path d="M1.4 16.8 L1.4 8.5 A7.1 7.3 0 0 1 15.6 8.5 L15.6 16.8" fill="none" stroke="#bb64dd" stroke-width="1.5"/><path d="M3.9 9.8 L3.9 16.9 M13.1 9.8 L13.1 16.9" stroke="#d95ff3" stroke-width="1.7"/></svg>
<svg style="left:240px;top:944.0px" width="17" height="17" viewBox="0 0 17 17"><circle cx="8.5" cy="8.8" r="7.8" fill="none" stroke="#ddd" stroke-width="1.7"/><path d="M4.3 6.6 L8.5 11 L12.7 6.6" fill="none" stroke="#ddd" stroke-width="1.6"/></svg>
<svg style="left:14.5px;top:971.5px" width="13" height="13"><path d="M6.5 0 L6.5 13 M0 6.5 L13 6.5" stroke="#ddd" stroke-width="1.4"/></svg>
<div class="t" style="left:36.5px;top:972.60px;font-size:11.7px;font-weight:400;color:#d4d4d4;letter-spacing:0.85px;">Pair with track</div>
<svg style="left:12.5px;top:1038.3px" width="17" height="17"><circle cx="8.2" cy="8.2" r="8.2" fill="#22ef97"/></svg>
<div class="t" style="left:36.5px;top:1040.53px;font-size:14.5px;font-weight:700;color:#fff;letter-spacing:0px;">Pluck 2</div>
<svg style="left:171px;top:1037.8px" width="17" height="17"><circle cx="8.2" cy="8.2" r="8.2" fill="#f2e436"/></svg>
<svg style="left:194px;top:1038.0px" width="17" height="17" viewBox="0 0 17 17"><rect x="1" y="1" width="15" height="15" rx="2.5" fill="none" stroke="#fff" stroke-width="2"/><path d="M4.3 9.2 L6.9 11.9 L12.2 6.6" fill="none" stroke="#fff" stroke-width="1.8" stroke-linecap="round" stroke-linejoin="round"/></svg>
<svg style="left:216.5px;top:1038.0px" width="17" height="18" viewBox="0 0 17 18"><path d="M1.4 16.8 L1.4 8.5 A7.1 7.3 0 0 1 15.6 8.5 L15.6 16.8" fill="none" stroke="#bb64dd" stroke-width="1.5"/><path d="M3.9 9.8 L3.9 16.9 M13.1 9.8 L13.1 16.9" stroke="#d95ff3" stroke-width="1.7"/></svg>
<svg style="left:240px;top:1038.0px" width="17" height="17" viewBox="0 0 17 17"><circle cx="8.5" cy="8.8" r="7.8" fill="none" stroke="#ddd" stroke-width="1.7"/><path d="M4.3 6.6 L8.5 11 L12.7 6.6" fill="none" stroke="#ddd" stroke-width="1.6"/></svg>
<svg style="left:14.5px;top:1066.0px" width="13" height="13"><path d="M6.5 0 L6.5 13 M0 6.5 L13 6.5" stroke="#ddd" stroke-width="1.4"/></svg>
<div class="t" style="left:36.5px;top:1067.10px;font-size:11.7px;font-weight:400;color:#d4d4d4;letter-spacing:0.85px;">Pair with track</div>
<div style="position:absolute;left:4px;top:1136px;width:266px;height:36px;box-sizing:border-box;border:2px solid #76eca2;border-radius:8px;background:#22252e;"></div>
<svg style="left:11.5px;top:1145.1px" width="17" height="17"><circle cx="8.2" cy="8.2" r="8.2" fill="#22ef97"/></svg>
<div class="t" style="left:35.5px;top:1147.33px;font-size:14.5px;font-weight:700;color:#fff;letter-spacing:0px;">FX Group</div>
<svg style="left:170px;top:1144.6px" width="17" height="17"><circle cx="8.2" cy="8.2" r="8.2" fill="#f2e436"/></svg>
<svg style="left:193px;top:1144.8px" width="17" height="17" viewBox="0 0 17 17"><rect x="1" y="1" width="15" height="15" rx="2.5" fill="none" stroke="#fff" stroke-width="2"/><path d="M4.3 9.2 L6.9 11.9 L12.2 6.6" fill="none" stroke="#fff" stroke-width="1.8" stroke-linecap="round" stroke-linejoin="round"/></svg>
<svg style="left:215.5px;top:1144.8px" width="17" height="18" viewBox="0 0 17 18"><path d="M1.4 16.8 L1.4 8.5 A7.1 7.3 0 0 1 15.6 8.5 L15.6 16.8" fill="none" stroke="#bb64dd" stroke-width="1.5"/><path d="M3.9 9.8 L3.9 16.9 M13.1 9.8 L13.1 16.9" stroke="#d95ff3" stroke-width="1.7"/></svg>
<svg style="left:239px;top:1144.8px" width="17" height="17" viewBox="0 0 17 17"><circle cx="8.5" cy="8.8" r="7.8" fill="none" stroke="#ddd" stroke-width="1.7"/><path d="M6.6 4.3 L11 8.5 L6.6 12.7" fill="none" stroke="#ddd" stroke-width="1.6"/></svg>
<div style="position:absolute;left:4px;top:1181px;width:266px;height:35px;box-sizing:border-box;border:2px solid #e64bd6;border-radius:8px;background:#22252e;"></div>
<svg style="left:11.5px;top:1189.3px" width="17" height="17"><circle cx="8.2" cy="8.2" r="8.2" fill="#22ef97"/></svg>
<div class="t" style="left:35.5px;top:1190.53px;font-size:14.5px;font-weight:700;color:#fff;letter-spacing:0px;">Vocals Group</div>
<svg style="left:170px;top:1188.8px" width="17" height="17"><circle cx="8.2" cy="8.2" r="8.2" fill="#f2e436"/></svg>
<svg style="left:193px;top:1189.0px" width="17" height="17" viewBox="0 0 17 17"><rect x="1" y="1" width="15" height="15" rx="2.5" fill="none" stroke="#fff" stroke-width="2"/><path d="M4.3 9.2 L6.9 11.9 L12.2 6.6" fill="none" stroke="#fff" stroke-width="1.8" stroke-linecap="round" stroke-linejoin="round"/></svg>
<svg style="left:215.5px;top:1189.0px" width="17" height="18" viewBox="0 0 17 18"><path d="M1.4 16.8 L1.4 8.5 A7.1 7.3 0 0 1 15.6 8.5 L15.6 16.8" fill="none" stroke="#bb64dd" stroke-width="1.5"/><path d="M3.9 9.8 L3.9 16.9 M13.1 9.8 L13.1 16.9" stroke="#d95ff3" stroke-width="1.7"/></svg>
<svg style="left:239px;top:1189.0px" width="17" height="17" viewBox="0 0 17 17"><circle cx="8.5" cy="8.8" r="7.8" fill="none" stroke="#ddd" stroke-width="1.7"/><path d="M6.6 4.3 L11 8.5 L6.6 12.7" fill="none" stroke="#ddd" stroke-width="1.6"/></svg>
</body></html>
